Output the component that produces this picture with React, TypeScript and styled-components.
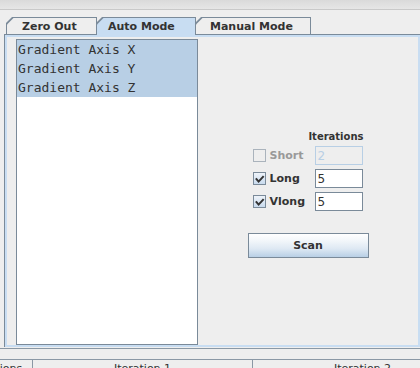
import React from "react";
import styled, { createGlobalStyle } from "styled-components";

const GlobalStyle = createGlobalStyle`
  html, body {
    margin: 0;
    padding: 0;
    background: #eeeeee;
    overflow: hidden;
  }
  #root {
    width: 420px;
    height: 368px;
    overflow: hidden;
  }
`;

const tabs = [
  { label: "Zero Out", width: 91, pl: 16 },
  { label: "Auto Mode", width: 100, pl: 12, active: true },
  { label: "Manual Mode", width: 116, pl: 15 },
];

const axes = ["Gradient Axis X", "Gradient Axis Y", "Gradient Axis Z"];

const iterations = [
  { label: "Short", value: "2", checked: false, disabled: true },
  { label: "Long", value: "5", checked: true },
  { label: "Vlong", value: "5", checked: true },
];

const columns = [
  { label: "Iterations", width: 73 },
  { label: "Iteration 1", width: 220 },
  { label: "Iteration 2", width: 220 },
];

const CheckMark = () => (
  <svg width="11" height="11" viewBox="0 0 11 11">
    <path d="M2.5 6.2 L4.6 8.6 L9 3.8" fill="none" stroke="#333" strokeWidth="2" strokeLinecap="square" />
  </svg>
);

const App: React.FC = () => {
  return (
    <Window>
      <GlobalStyle />
      <TopStrip />
      <TabStrip>
        {tabs.map((t) => (
          <Tab key={t.label} $w={t.width} $active={!!t.active}>
            <TabFace $active={!!t.active} $pl={t.pl}>
              {t.label}
            </TabFace>
          </Tab>
        ))}
      </TabStrip>
      <Panel>
        <PanelInner>
          <AxisList>
            {axes.map((a) => (
              <AxisRow key={a} $selected>
                {a}
              </AxisRow>
            ))}
          </AxisList>
          <ControlArea>
            <Controls>
              <ColumnTitle>Iterations</ColumnTitle>
              {iterations.map((it) => (
                <IterRow key={it.label}>
                  <Box $checked={it.checked} $disabled={!!it.disabled}>
                    {it.checked && <CheckMark />}
                  </Box>
                  <IterLabel $disabled={!!it.disabled}>{it.label}</IterLabel>
                  <Field $disabled={!!it.disabled}>{it.value}</Field>
                </IterRow>
              ))}
              <ScanButton>Scan</ScanButton>
            </Controls>
          </ControlArea>
        </PanelInner>
      </Panel>
      <Divider />
      <HeaderRow>
        {columns.map((c) => (
          <HeaderCell key={c.label} $w={c.width}>
            {c.label}
          </HeaderCell>
        ))}
      </HeaderRow>
    </Window>
  );
};

export default App;

const Window = styled.div`
  width: 420px;
  height: 368px;
  display: flex;
  flex-direction: column;
  overflow: hidden;
  font-family: "DejaVu Sans", "Liberation Sans", sans-serif;
  color: #333333;
`;

const TopStrip = styled.div`
  flex: none;
  height: 9px;
  background: linear-gradient(#dadada, #e6e6e6);
  border-bottom: 1px solid #c9c9c9;
`;

const TabStrip = styled.div`
  flex: none;
  display: flex;
  align-items: flex-start;
  height: 17px;
  margin-top: 7px;
  padding-left: 7px;
  position: relative;
  z-index: 1;
`;

const Tab = styled.div<{ $w: number; $active: boolean }>`
  box-sizing: border-box;
  width: ${(p) => p.$w}px;
  height: ${(p) => (p.$active ? 18 : 17)}px;
  margin-left: -1px;
  padding: 1px 1px 0 1px;
  background: #7a8a99;
  clip-path: polygon(0 6px, 6px 0, 100% 0, 100% 100%, 0 100%);
`;

const TabFace = styled.div<{ $active: boolean; $pl: number }>`
  box-sizing: border-box;
  height: 100%;
  padding: 1px 0 0 ${(p) => p.$pl - 1}px;
  background: ${(p) => (p.$active ? "#c8ddf2" : "#eeeeee")};
  clip-path: polygon(0 6.5px, 6.5px 0, 100% 0, 100% 100%, 0 100%);
  font-size: 11px;
  font-weight: bold;
  line-height: 15px;
  white-space: nowrap;
`;

const Panel = styled.div`
  flex: none;
  margin: 0 -1px 0 4px;
  border: 1px solid #7a8a99;
  border-bottom: none;
`;

const PanelInner = styled.div`
  display: flex;
  height: 308px;
  border: 2px solid #c8ddf2;
`;

const AxisList = styled.div`
  box-sizing: border-box;
  flex: none;
  width: 182px;
  height: 306px;
  margin: 2px 0 0 9px;
  background: #ffffff;
  border: 1px solid #7a8a99;
`;

const AxisRow = styled.div<{ $selected?: boolean }>`
  box-sizing: border-box;
  height: 19px;
  padding: 1px 0 0 1px;
  line-height: 18px;
  background: ${(p) => (p.$selected ? "#b8cfe5" : "transparent")};
  font-family: "DejaVu Sans Mono", "Liberation Mono", monospace;
  font-size: 13px;
  color: #333333;
  white-space: nowrap;
`;

const ControlArea = styled.div`
  flex: 1;
  display: flex;
  align-items: center;
  justify-content: center;
  padding-top: 5px;
`;

const Controls = styled.div`
  width: 121px;
  display: flex;
  flex-direction: column;
`;

const ColumnTitle = styled.div`
  height: 13px;
  line-height: 13px;
  padding-right: 5px;
  margin-bottom: 3px;
  text-align: right;
  font-size: 10px;
  font-weight: bold;
`;

const IterRow = styled.div`
  display: flex;
  align-items: center;
  height: 19px;
  padding-left: 5px;
  margin-bottom: 4px;
`;

const Box = styled.span<{ $checked: boolean; $disabled: boolean }>`
  box-sizing: border-box;
  flex: none;
  width: 13px;
  height: 13px;
  display: flex;
  align-items: center;
  justify-content: center;
  border: 1px solid ${(p) => (p.$disabled ? "#aab3bc" : "#7a8a99")};
  background: ${(p) =>
    p.$disabled ? "#eeeeee" : "linear-gradient(#eef3f9, #c9dbee)"};
`;

const IterLabel = styled.span<{ $disabled: boolean }>`
  box-sizing: border-box;
  width: 49px;
  padding-left: 4px;
  font-size: 11px;
  font-weight: bold;
  color: ${(p) => (p.$disabled ? "#999999" : "#333333")};
`;

const Field = styled.div<{ $disabled: boolean }>`
  box-sizing: border-box;
  width: 48px;
  height: 19px;
  padding: 2px 0 0 2px;
  line-height: 15px;
  font-size: 12px;
  background: ${(p) => (p.$disabled ? "#eeeeee" : "#ffffff")};
  border: 1px solid ${(p) => (p.$disabled ? "#b8cfe5" : "#7a8a99")};
  color: ${(p) => (p.$disabled ? "#b8cfe5" : "#333333")};
`;

const ScanButton = styled.button`
  box-sizing: border-box;
  width: 121px;
  height: 25px;
  margin-top: 18px;
  padding: 0;
  border: 1px solid #7a8a99;
  border-radius: 0;
  background: linear-gradient(#ffffff 0%, #f2f6fa 30%, #dde8f3 65%, #b8cfe5 100%);
  font-family: "DejaVu Sans", "Liberation Sans", sans-serif;
  font-size: 11px;
  font-weight: bold;
  color: #333333;
`;

const Divider = styled.div`
  flex: none;
  height: 1px;
  margin-top: 1px;
  background: #8a98a5;
`;

const HeaderRow = styled.div`
  flex: none;
  display: flex;
  margin: 10px 0 0 -40px;
  border-top: 1px solid #8a98a5;
`;

const HeaderCell = styled.div<{ $w: number }>`
  box-sizing: border-box;
  flex: none;
  width: ${(p) => p.$w}px;
  height: 20px;
  border-right: 1px solid #8a98a5;
  text-align: center;
  font-size: 11px;
  line-height: 16px;
  padding-top: 1px;
  white-space: nowrap;
`;
